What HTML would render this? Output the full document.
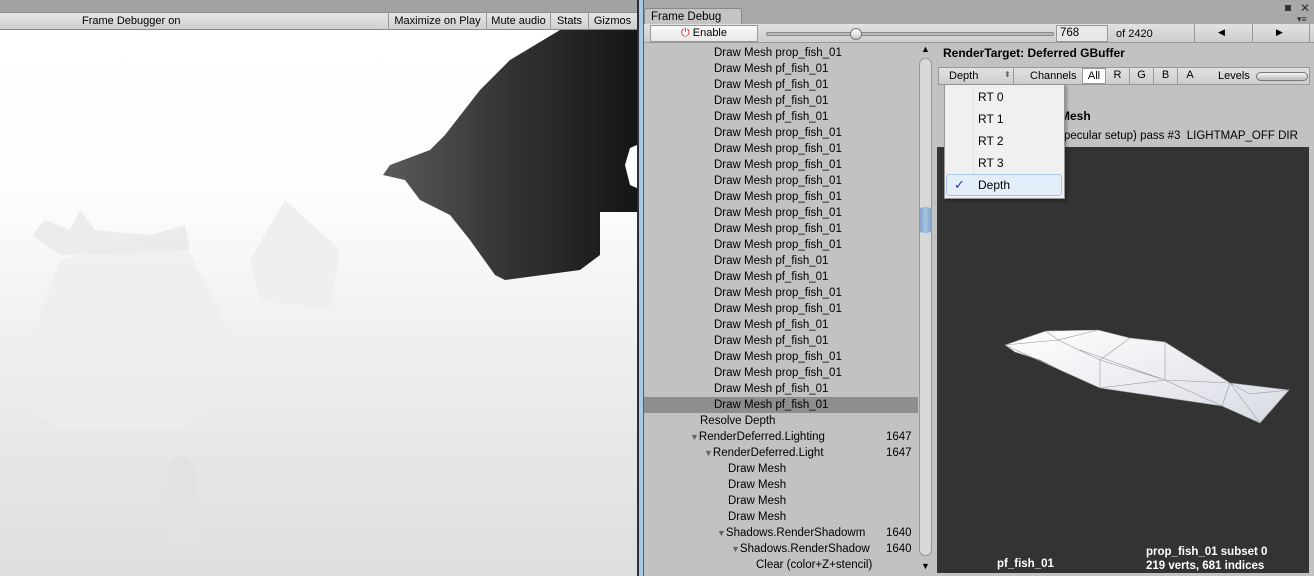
<!DOCTYPE html>
<html style="overflow:hidden"><head><meta charset="utf-8"><style>
*{margin:0;padding:0;box-sizing:border-box}
html,body{width:1314px;height:576px;overflow:hidden}
body{position:relative;background:#c2c2c2;font-family:"Liberation Sans","DejaVu Sans",sans-serif;font-size:11.5px;color:#000}
.a{position:absolute;white-space:nowrap}
.row{position:absolute;height:16px;line-height:16px;white-space:nowrap}
.tb{position:absolute;top:12px;height:18px;line-height:18px;font-size:11px;border-left:1px solid #999;text-align:center}
</style></head><body>
<!-- game view -->
<div class="a" style="left:0;top:0;width:637px;height:13px;background:#a2a2a2"></div>
<div class="a" style="left:0;top:12px;width:637px;height:18px;background:linear-gradient(#e4e4e4,#cfcfcf);border-top:1px solid #8a8a8a;border-bottom:1px solid #8a8a8a"></div>
<div class="a" style="left:82px;top:13px;line-height:17px;font-size:11px">Frame Debugger on</div>
<div class="tb" style="left:388px;width:98px">Maximize on Play</div>
<div class="tb" style="left:486px;width:64px">Mute audio</div>
<div class="tb" style="left:550px;width:38px">Stats</div>
<div class="tb" style="left:588px;width:48px">Gizmos</div>
<svg class="a" style="left:0;top:30px" width="637" height="546">
<defs><linearGradient id="bg" x1="0" y1="0" x2="0" y2="1"><stop offset="0" stop-color="#fff"/><stop offset="0.3" stop-color="#fdfdfd"/><stop offset="0.55" stop-color="#f0f0f0"/><stop offset="1" stop-color="#dedede"/></linearGradient>
<linearGradient id="fg" x1="0" y1="0" x2="1" y2="0"><stop offset="0" stop-color="#5a5a5a"/><stop offset="0.5" stop-color="#333"/><stop offset="1" stop-color="#151515"/></linearGradient></defs>
<rect width="637" height="546" fill="url(#bg)"/>
<path d="M12 365 L60 230 L100 220 L180 205 L250 340 L180 400 L60 400 Z" fill="#ececec" opacity="0.7"/>
<path d="M32 205 L45 190 L70 200 L80 180 L95 200 L150 205 L185 195 L190 220 L60 225Z" fill="#e8e8e8" opacity="0.8"/>
<path d="M250 230 L285 170 L340 220 L330 280 L260 270Z" fill="#efefef"/>
<path d="M168 440 Q180 410 195 440 L200 520 L165 520Z" fill="#e2e2e2"/>
<path d="M560 0 L637 0 L637 182 L600 182 L600 225 L580 240 L505 250 L495 245 L470 210 L450 185 L420 170 L405 150 L383 145 L390 135 L430 120 L445 105 L480 60 L510 30 Z" fill="url(#fg)"/>
<path d="M637 115 L630 118 L625 135 L630 155 L637 158Z" fill="#fff"/>
</svg>
<!-- window frame -->
<div class="a" style="left:637px;top:0;width:7px;height:576px;background:#a9c8e6;border-left:2px solid #2a2f36;border-right:1px solid #55606a"></div>
<div class="a" style="left:644px;top:0;width:670px;height:24px;background:#a8a8a8"></div>
<div class="a" style="left:644px;top:8px;width:98px;height:17px;background:#c4c4c4;border:1px solid #888;border-bottom:none;border-radius:3px 3px 0 0;padding-left:6px;line-height:16px">Frame Debug</div>
<div class="a" style="left:1285px;top:5px;width:6px;height:6px;background:#333"></div>
<div class="a" style="left:1300px;top:1px;font-size:12px;color:#333">✕</div>
<div class="a" style="left:1297px;top:14px;font-size:9px;color:#333">▾≡</div>
<!-- toolbar -->
<div class="a" style="left:644px;top:24px;width:670px;height:19px;background:linear-gradient(#e2e2e2,#cdcdcd);border-bottom:1px solid #999"></div>
<div class="a" style="left:650px;top:25px;width:108px;height:17px;background:linear-gradient(#fafafa,#e8e8e8);border:1px solid #999;line-height:15px;text-align:center;font-size:11px"><span style="color:#c22">⏻</span> Enable</div>
<div class="a" style="left:766px;top:32px;width:288px;height:4px;background:#bbb;border:1px solid #888;border-radius:2px"></div>
<div class="a" style="left:850px;top:28px;width:12px;height:12px;border-radius:50%;background:linear-gradient(#fff,#ccc);border:1px solid #777"></div>
<div class="a" style="left:1056px;top:25px;width:52px;height:17px;background:#e8e8e8;border:1px solid #999;line-height:15px;padding-left:3px">768</div>
<div class="a" style="left:1116px;top:27px;line-height:15px;font-size:11px">of 2420</div>
<div class="a" style="left:1194px;top:24px;width:1px;height:19px;background:#999"></div>
<div class="a" style="left:1252px;top:24px;width:1px;height:19px;background:#999"></div>
<div class="a" style="left:1309px;top:24px;width:1px;height:19px;background:#999"></div>
<div class="a" style="left:1218px;top:27px;font-size:9px">◀</div>
<div class="a" style="left:1276px;top:27px;font-size:9px">▶</div>
<!-- list -->
<div class="a" style="left:644px;top:397px;width:274px;height:16px;background:#8e8e8e"></div>
<div id="list"></div>
<!-- scrollbar -->
<div class="a" style="left:918px;top:44px;width:16px;height:532px;background:#c2c2c2"></div>
<div class="a" style="left:919px;top:58px;width:13px;height:498px;background:#d8d8d8;border:1px solid #999;border-radius:6px"></div>
<div class="a" style="left:919px;top:207px;width:13px;height:26px;background:linear-gradient(90deg,#7a9ec7,#a9c3e0,#7a9ec7);border-radius:5px"></div>
<div class="a" style="left:921px;top:44px;font-size:9px">▲</div>
<div class="a" style="left:921px;top:561px;font-size:9px">▼</div>
<!-- right panel -->
<div class="a" style="left:943px;top:46px;font-weight:bold;font-size:12px">RenderTarget: Deferred GBuffer</div>
<div class="a" style="left:938px;top:67px;width:372px;height:18px;background:linear-gradient(#e2e2e2,#cdcdcd);border:1px solid #999"></div>
<div class="a" style="left:949px;top:70px;font-size:11px">Depth</div>
<div class="a" style="left:1004px;top:70px;font-size:8px;color:#666">⬍</div>
<div class="a" style="left:1013px;top:68px;width:1px;height:16px;background:#999"></div>
<div class="a" style="left:1030px;top:70px;font-size:11px">Channels</div>
<div class="a" style="left:1082px;top:68px;width:24px;height:16px;background:#fff;border:1px solid #999;text-align:center;line-height:14px;font-size:11px">All</div>
<div class="a" style="left:1106px;top:68px;width:24px;height:16px;border-right:1px solid #999;text-align:center;line-height:14px;font-size:11px">R</div>
<div class="a" style="left:1130px;top:68px;width:24px;height:16px;border-right:1px solid #999;text-align:center;line-height:14px;font-size:11px">G</div>
<div class="a" style="left:1154px;top:68px;width:24px;height:16px;border-right:1px solid #999;text-align:center;line-height:14px;font-size:11px">B</div>
<div class="a" style="left:1178px;top:68px;width:24px;height:16px;text-align:center;line-height:14px;font-size:11px">A</div>
<div class="a" style="left:1218px;top:70px;font-size:11px">Levels</div>
<div class="a" style="left:1256px;top:72px;width:52px;height:9px;border-radius:5px;background:linear-gradient(#f4f4f4,#bbb);border:1px solid #777"></div>
<div class="a" style="left:1060px;top:109px;font-weight:bold;font-size:12px">Mesh</div>
<div class="a" style="left:1064px;top:130px;font-size:11.5px">pecular setup) pass #3&nbsp; LIGHTMAP_OFF DIR</div>
<!-- preview -->
<div class="a" style="left:937px;top:147px;width:372px;height:426px;background:#333"></div>
<svg class="a" style="left:937px;top:147px" width="372" height="426">
<defs><linearGradient id="fish" x1="0" y1="0" x2="1" y2="1"><stop offset="0" stop-color="#fff"/><stop offset="1" stop-color="#d8dbe4"/></linearGradient></defs>
<g transform="translate(-937,-147)">
<path d="M1005 345 L1046 331 L1098 330 L1130 338 L1165 342 L1230 383 L1289 390 L1260 423 L1222 406 L1100 388 L1060 370 L1040 360 L1015 352Z" fill="url(#fish)" stroke="#999" stroke-width="0.6"/>
<g stroke="#999" stroke-width="0.6" fill="none">
<path d="M1005 345 L1060 370 M1046 331 L1058 340 L1098 330 M1058 340 L1100 360 L1130 338 M1100 360 L1100 388 M1100 360 L1165 380 L1165 342 M1165 380 L1230 383 L1222 406 M1165 380 L1222 406 M1230 383 L1260 423 M1100 388 L1165 380 M1230 383 L1250 394 L1289 390 M1058 340 L1005 345 M1080 350 L1165 380"/>
</g></g>
</svg>
<div class="a" style="left:997px;top:558px;color:#fff;font-weight:bold;font-size:11.5px">pf_fish_01</div>
<div class="a" style="left:1146px;top:545px;color:#fff;font-weight:bold;font-size:11.5px;line-height:14px">prop_fish_01 subset 0<br>219 verts, 681 indices</div>
<!-- dropdown -->
<div class="a" style="left:944px;top:84px;width:121px;height:115px;background:#f0f0f0;border:1px solid #979797;box-shadow:2px 2px 3px rgba(0,0,0,.3)"></div>
<div class="a" style="left:973px;top:86px;width:1px;height:110px;background:#e2e2e2"></div>
<div class="a" style="left:978px;top:90px;font-size:12px">RT 0</div>
<div class="a" style="left:978px;top:112px;font-size:12px">RT 1</div>
<div class="a" style="left:978px;top:134px;font-size:12px">RT 2</div>
<div class="a" style="left:978px;top:156px;font-size:12px">RT 3</div>
<div class="a" style="left:946px;top:174px;width:116px;height:22px;background:#e4eefa;border:1px solid #a9c6ec;border-radius:3px"></div>
<div class="a" style="left:954px;top:177px;color:#1a3caa;font-size:13px">✓</div>
<div class="a" style="left:978px;top:178px;font-size:12px">Depth</div>
<script>
var P="Draw Mesh prop_fish_01",F="Draw Mesh pf_fish_01";
var seq=[P,F,F,F,F,P,P,P,P,P,P,P,P,F,F,P,P,F,F,P,P,F,F];
var rows=seq.map(function(s){return [s,714];}).concat([
["Resolve Depth",700],["▼RenderDeferred.Lighting",690,"1647"],["▼RenderDeferred.Light",704,"1647"],["Draw Mesh",728],["Draw Mesh",728],["Draw Mesh",728],["Draw Mesh",728],
["▼Shadows.RenderShadowm",717,"1640"],["▼Shadows.RenderShadow",731,"1640"],["Clear (color+Z+stencil)",756]]);
var h="";rows.forEach(function(r,i){var y=45+i*16;var t=r[0].replace("▼",'<span style="color:#666;font-size:9px">▼</span>');
h+='<div class="row" style="left:'+r[1]+'px;top:'+y+'px">'+t+'</div>';if(r[2])h+='<div class="row" style="left:886px;top:'+y+'px">'+r[2]+'</div>';});
document.getElementById("list").innerHTML=h;
</script>
</body></html>
